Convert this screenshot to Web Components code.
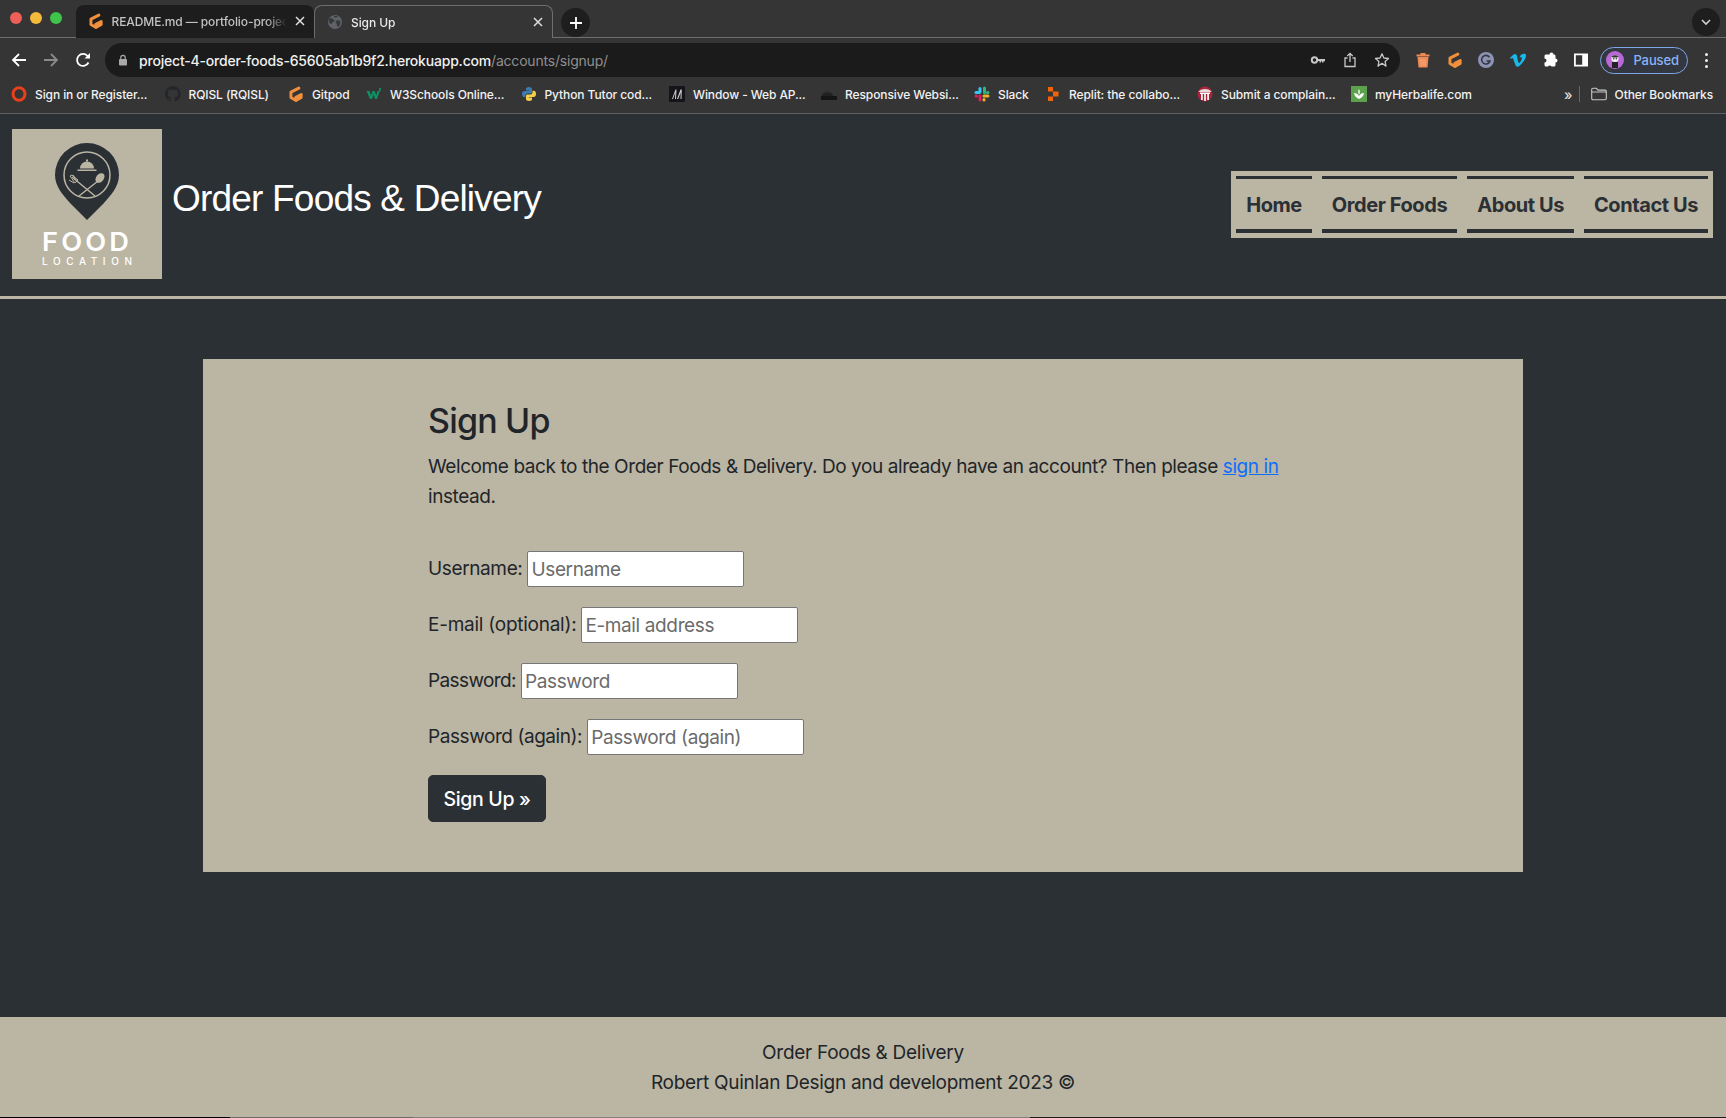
<!DOCTYPE html>
<html lang="en">
<head>
<meta charset="utf-8">
<title>Sign Up</title>
<style>
    html, body { margin: 0; height: 100%; background: #2b3035; }
    body { display: flex; flex-direction: column; height: 1118px; overflow: hidden; font-family: Inter, "Liberation Sans", sans-serif; }
    site-main { flex: 1; }
</style>
</head>
<body>
    <browser-tabstrip>
        <browser-tab icon="gitpod" muted>README.md — portfolio-project-4</browser-tab>
        <browser-tab icon="globe" active>Sign Up</browser-tab>
    </browser-tabstrip>
    <browser-toolbar></browser-toolbar>
    <bookmark-bar>
        <bookmark-item icon="opera" style="width:138px">Sign in or Register...</bookmark-item>
        <bookmark-item icon="github" style="width:108px">RQISL (RQISL)</bookmark-item>
        <bookmark-item icon="gitpod" style="width:62.500px">Gitpod</bookmark-item>
        <bookmark-item icon="w3" style="width:139px">W3Schools Online...</bookmark-item>
        <bookmark-item icon="python" style="width:133px">Python Tutor cod...</bookmark-item>
        <bookmark-item icon="mdn" style="width:136.500px">Window - Web AP...</bookmark-item>
        <bookmark-item icon="responsive" style="width:137.500px">Responsive Websi...</bookmark-item>
        <bookmark-item icon="slack" style="width:55.500px">Slack</bookmark-item>
        <bookmark-item icon="replit" style="width:136.500px">Replit: the collabo...</bookmark-item>
        <bookmark-item icon="submit" style="width:138.500px">Submit a complain...</bookmark-item>
        <bookmark-item icon="herbalife">myHerbalife.com</bookmark-item>
    </bookmark-bar>

    <site-header title="Order Foods &amp; Delivery">
        <nav-link>Home</nav-link>
        <nav-link>Order Foods</nav-link>
        <nav-link>About Us</nav-link>
        <nav-link>Contact Us</nav-link>
    </site-header>

    <site-main>
        <signup-card heading="Sign Up">
            <form-row label="Username:" placeholder="Username"></form-row>
            <form-row label="E-mail (optional):" placeholder="E-mail address" style="letter-spacing:-.25px"></form-row>
            <form-row label="Password:" placeholder="Password" style="letter-spacing:-.61px"></form-row>
            <form-row label="Password (again):" placeholder="Password (again)" style="letter-spacing:-.43px"></form-row>
        </signup-card>
    </site-main>

    <site-footer>
        <div>Order Foods &amp; Delivery</div>
        <div>Robert Quinlan Design and development 2023 ©</div>
    </site-footer>
    <dock-sliver></dock-sliver>

<script>
const ICONS = {
    gitpod: `<svg viewBox="1.500 1.500 13 13" width="16" height="16"><path d="M10.300 3.200 3.900 6.500v4.300L8 13.200l4.200-2.400V8.400L7.900 10.600" fill="none" stroke="#f0903c" stroke-width="2.400" stroke-linecap="round" stroke-linejoin="round"/></svg>`,
    globe: `<svg viewBox="0 0 16 16" width="16" height="16"><circle cx="8" cy="8" r="7" fill="#5f6368"/><path d="M3 4c2 0 3 1 4 2s0 2-1 2-1 2-2 2-2-2-2-3 0-3 1-3zm6 3c1-1 3-1 4 0s0 4-1 5-2 1-2 0 0-2-1-3 0-2 0-2zM7 1.500c1 1 3 0 4 .8-1 1-2 1.700-3 1.200S6.500 2 7 1.500z" fill="#36383a"/></svg>`,
    opera: `<svg viewBox="0 0 16 16" width="16" height="16"><ellipse cx="8" cy="8" rx="6" ry="6.300" fill="none" stroke="#e8401c" stroke-width="3"/></svg>`,
    github: `<svg viewBox="0 0 16 16" width="16" height="16"><path fill="#23272b" d="M8 0a8 8 0 0 0-2.500 15.600c.4.1.5-.2.5-.4v-1.400c-2.200.5-2.700-1-2.700-1-.4-.9-.9-1.200-.9-1.200-.7-.5.100-.5.100-.5.800.100 1.200.8 1.200.8.700 1.200 1.900.9 2.300.7.100-.5.300-.9.500-1.100-1.800-.2-3.700-.9-3.700-4 0-.9.300-1.600.8-2.100-.1-.2-.4-1 .1-2.100 0 0 .7-.2 2.200.8a7.500 7.500 0 0 1 4 0c1.500-1 2.200-.8 2.200-.8.400 1.100.2 1.900.1 2.100.5.600.8 1.300.8 2.100 0 3.100-1.900 3.700-3.700 3.900.3.300.6.800.6 1.500v2.200c0 .2.100.5.600.4A8 8 0 0 0 8 0z"/></svg>`,
    w3: `<svg viewBox="0 0 16 16" width="16" height="16"><path d="M.5 5h3.200l1.300 4.500L6.500 5h2.300l1.400 4.500L11.500 5h2.400L11 13H9.100L7.600 8.500 6 13H4z" fill="#0f8f63"/><path d="M13 2h2v1l-1 .8h1v1.200h-2v-.8l1-1h-1z" fill="#0f8f63"/></svg>`,
    python: `<svg viewBox="0 0 16 16" width="16" height="16"><path d="M8 1C5.500 1 5 2 5 3v1.500h3.200V5H3.300C2 5 1 6 1 8s1 3.200 2.200 3.200H4.500V9.500c0-1.100 1-2 2-2h3c.9 0 1.500-.7 1.500-1.500V3c0-1-1-2-3-2z" fill="#3d7cb0"/><path d="M8 15c2.500 0 3-1 3-2v-1.500H7.800V11h4.900C14 11 15 10 15 8s-1-3.200-2.200-3.200H11.500v1.700c0 1.100-1 2-2 2h-3c-.9 0-1.500.7-1.500 1.500v3c0 1 1 2 3 2z" fill="#f5cf4a"/></svg>`,
    mdn: `<svg viewBox="0 0 16 16" width="16" height="16"><rect width="16" height="16" fill="#15141a"/><path d="M3 13 6.500 3.500h1L7 13H6l.3-6.500L4 13zm5 0 3.500-9.500h1.300L12.500 13h-1l.2-6.500L9.200 13z" fill="#cfcfcf"/></svg>`,
    responsive: `<svg viewBox="0 0 16 16" width="16" height="16"><path d="M0 10h16v4H0z" fill="#151515"/><path d="M2 7h9l1 3H1z" fill="#202020"/><path d="M4 5.500h5V7H4z" fill="#2a2a2a"/></svg>`,
    slack: `<svg viewBox="0 0 16 16" width="16" height="16"><g fill="none" stroke-width="3" stroke-linecap="round"><path d="M6 2.500v3.500" stroke="#36c5f0"/><path d="M2 6.500h3" stroke="#36c5f0"/><path d="M10.500 2v4.500" stroke="#2eb67d"/><path d="M14 6.500h-.5" stroke="#2eb67d"/><path d="M10 14v-.5" stroke="#ecb22e"/><path d="M10 10h4" stroke="#ecb22e"/><path d="M6 14v-4" stroke="#e01e5a"/><path d="M2 10h.5" stroke="#e01e5a"/></g></svg>`,
    replit: `<svg viewBox="0 0 16 16" width="16" height="16"><path d="M3 1h5v4.500H3zM8 5.500h5.500v5H8zM3 10.500h5V15H3z" fill="#f26207"/></svg>`,
    submit: `<svg viewBox="0 0 16 16" width="16" height="16"><circle cx="8" cy="8" r="7.500" fill="#a8243b"/><path d="M1.500 6C3 2 13 2 14.500 6z" fill="#e6dada"/><path d="M3 6.500h10v1.500H3z" fill="#fff"/><path d="M4 8h1.800v6H4zM7.100 8h1.800v7H7.100zM10.200 8H12v6h-1.800z" fill="#f2eeee"/></svg>`,
    herbalife: `<svg viewBox="0 0 16 16" width="16" height="16"><rect width="16" height="16" fill="#5ca14b"/><path d="M3 7c2 0 4 1 5 3 1-2 3-3 5-3-.3 3-2.500 5-5 6-2.500-1-4.700-3-5-6z" fill="#fff"/><path d="M8 3c1 1.500 1 4 0 6-1-2-1-4.500 0-6z" fill="#fff"/></svg>`,
    folder: `<svg viewBox="0 0 16 16" width="16" height="16"><path d="M.7 3.500c0-.7.500-1.200 1.200-1.200h3.500l1.600 1.800h7.100c.7 0 1.200.5 1.200 1.200v7.200c0 .7-.5 1.200-1.200 1.200H1.900c-.7 0-1.200-.5-1.200-1.200zM.7 6h14.600" fill="none" stroke="#c7c7c7" stroke-width="1.100"/></svg>`,
    back: `<svg viewBox="0 0 16 16" width="16" height="16"><path d="M15 8H2.500M8 2 2 8l6 6" fill="none" stroke="#fff" stroke-width="1.800"/></svg>`,
    forward: `<svg viewBox="0 0 16 16" width="16" height="16"><path d="M1 8h12.500M8 2l6 6-6 6" fill="none" stroke="#8a8a8a" stroke-width="1.800"/></svg>`,
    reload: `<svg viewBox="0 0 16 16" width="16" height="16"><path d="M13.500 10.500A6 6 0 1 1 12.600 4" fill="none" stroke="#fff" stroke-width="1.800"/><path d="M9.500 6.500h5.500V1z" fill="#fff"/></svg>`,
    lock: `<svg viewBox="0 0 12 12" width="12" height="12"><rect x="2" y="5" width="8" height="6.500" rx="1" fill="#a9a9a9"/><path d="M3.800 5V3.500a2.200 2.200 0 0 1 4.400 0V5" fill="none" stroke="#a9a9a9" stroke-width="1.200"/></svg>`,
    key: `<svg viewBox="0 0 16 16" width="16" height="16"><circle cx="4.500" cy="8" r="2.700" fill="none" stroke="#c7c7c7" stroke-width="2"/><path d="M7.500 7h7.500v2.200h-1.500v1.300h-1.500V9.200h-1v1.300H9.500V9H7.500z" fill="#c7c7c7"/></svg>`,
    share: `<svg viewBox="0 0 16 16" width="16" height="16"><path d="M5.500 6H3v8.500h10V6h-2.500" fill="none" stroke="#c7c7c7" stroke-width="1.300"/><path d="M8 10V1.500M5.300 4 8 1.300 10.700 4" fill="none" stroke="#c7c7c7" stroke-width="1.300"/></svg>`,
    star: `<svg viewBox="0 0 16 16" width="16" height="16"><path d="m8 1.800 1.900 4.200 4.600.5-3.400 3.100.9 4.500L8 11.300l-4 2.800.9-4.500L1.500 6.500 6.100 6z" fill="none" stroke="#c7c7c7" stroke-width="1.300" stroke-linejoin="round"/></svg>`,
    trash: `<svg viewBox="0 0 16 16" width="16" height="16"><path d="M1.500 2.500h13v2h-13zM5.500 1h5v1.500h-5z" fill="#ee8a55"/><path d="M2.500 5h11l-1 10.500h-9z" fill="#ee8a55"/><path d="M6 7v7M8 7v7M10 7v7" stroke="#f7b48c" stroke-width=".7"/></svg>`,
    grammarly: `<svg viewBox="0 0 16 16" width="16" height="16"><circle cx="8" cy="8" r="8" fill="#8c93b5"/><path d="M11.500 5.300A4.300 4.300 0 1 0 12 9H8.500" fill="none" stroke="#33363f" stroke-width="1.600"/></svg>`,
    vimeo: `<svg viewBox="0 0 16 16" width="16" height="16"><path d="M15.900 4.200c-.1 1.500-1.100 3.600-3.200 6.300-2.100 2.800-3.900 4.200-5.300 4.200-.9 0-1.700-.8-2.300-2.500L3.800 8.500C3.300 6.800 2.800 6 2.300 6c-.1 0-.5.200-1.300.8L0 5.800c.8-.7 1.600-1.400 2.400-2.200 1.100-.9 1.900-1.400 2.400-1.500 1.300-.1 2.100.8 2.400 2.600.3 2 .5 3.200.7 3.700.4 1.700.8 2.500 1.300 2.500.3 0 .9-.6 1.500-1.700.7-1.100 1-1.900 1.100-2.500.1-1-.3-1.400-1.100-1.400-.4 0-.8.100-1.200.3.800-2.600 2.300-3.800 4.500-3.800 1.700.1 2.400 1 1.900 2.400z" fill="#1ab7ea"/></svg>`,
    puzzle: `<svg viewBox="0 0 16 16" width="16" height="16"><path d="M6 3a2 2 0 0 1 4 0h.5c.8 0 1.500.7 1.500 1.500V7a2 2 0 0 1 0 4v2.500c0 .8-.7 1.500-1.500 1.500H8a2 2 0 0 0-3.500 0H2.500C1.700 15 1 14.300 1 13.500V11a2 2 0 0 0 0-4V4.500C1 3.700 1.700 3 2.500 3z" fill="#fff" transform="translate(1.500 -.5)"/></svg>`,
    sidebar: `<svg viewBox="0 0 16 16" width="16" height="16"><path fill-rule="evenodd" d="M1 1.500h14v13H1zM2.800 3.300v9.400h6.400V3.300z" fill="#fff"/></svg>`,
    avatar: `<svg viewBox="0 0 18 18" width="18" height="18"><circle cx="9" cy="9" r="9" fill="#ba68d8"/><path d="M6 17V11h6v6z" fill="#222"/><circle cx="9" cy="7.500" r="3.600" fill="#eee"/><path d="M5.500 6c1-2.500 6-2.500 7 0l-1.500.5h-4z" fill="#333"/><circle cx="7.700" cy="7.800" r=".7" fill="#222"/><circle cx="10.300" cy="7.800" r=".7" fill="#222"/></svg>`
};

// Small helper so each element doesn't repeat the attachShadow dance
class ShadowElement extends HTMLElement {
    connectedCallback() {
        if (!this.shadowRoot) {
            this.attachShadow({ mode: 'open' });
        }
        this.shadowRoot.innerHTML = this.render();
    }
}

class BrowserTabstrip extends ShadowElement {
    render() {
        return `
            <style>
                :host { display: flex; height: 38px; box-sizing: border-box; background: #353535; border-bottom: 1px solid #6e6e6e; }
                .lights { display: flex; gap: 8px; padding: 12px 0 0 10px; width: 75.500px; box-sizing: border-box; }
                .lights i { width: 12px; height: 12px; border-radius: 50%; }
                .tabs { display: flex; padding-top: 5px; }
                .new { width: 29px; height: 29px; margin: 8px 0 0 8px; border-radius: 50%; background: #1e1e1e; display: flex; align-items: center; justify-content: center; }
                .spacer { flex: 1; }
                .chev { width: 28px; height: 28px; margin: 8px 6px 0 0; border-radius: 50%; background: #1e1e1e; display: flex; align-items: center; justify-content: center; }
            </style>
            <div class="lights">
                <i style="background:#ed5f57"></i><i style="background:#f4ba3c"></i><i style="background:#3ec44a"></i>
            </div>
            <div class="tabs"><slot></slot></div>
            <div class="new"><svg viewBox="0 0 14 14" width="14" height="14"><path d="M7 1v12M1 7h12" stroke="#fff" stroke-width="1.800"/></svg></div>
            <div class="spacer"></div>
            <div class="chev"><svg viewBox="0 0 12 12" width="12" height="12"><path d="m2 4 4 4 4-4" fill="none" stroke="#d0d0d0" stroke-width="1.600"/></svg></div>
        `;
    }
}

class BrowserTab extends ShadowElement {
    render() {
        const active = this.hasAttribute('active');
        return `
            <style>
                :host { display: flex; align-items: center; width: ${active ? 239 : 238.5}px; height: 33px; box-sizing: border-box; padding: 0 9px 1px 12px; gap: 8px;
                    border-radius: 8px 8px 0 0; font: 500 12px Inter, "Liberation Sans", sans-serif; letter-spacing: -.1px;
                    ${active ? 'background:#353535;border:1px solid #6e6e6e;border-bottom:none;color:#e8e8e8;margin-bottom:-1px;height:34px;' : 'background:#1d1d1d;color:#c2c2c2;'} }
                .icon { width: 16px; height: 16px; flex: none; display: block; }
                .label { flex: 1; white-space: nowrap; overflow: hidden; -webkit-mask-image: linear-gradient(90deg, #000 88%, transparent); mask-image: linear-gradient(90deg, #000 88%, transparent); }
                .close { flex: none; width: 10px; height: 10px; }
            </style>
            <span class="icon">${ICONS[this.getAttribute('icon')]}</span>
            <span class="label"><slot></slot></span>
            <svg class="close" viewBox="0 0 10 10"><path d="m1 1 8 8M9 1 1 9" stroke="#e0e0e0" stroke-width="1.500"/></svg>
        `;
    }
}

class BrowserToolbar extends ShadowElement {
    render() {
        return `
            <style>
                :host { display: flex; align-items: center; height: 39px; padding-top: 5px; box-sizing: border-box; background: #353535; }
                .nav { display: flex; gap: 16px; padding-left: 11px; width: 105px; box-sizing: border-box; }
                .nav span, .ext span, .inner span { display: flex; width: 16px; height: 16px; }
                .omni { display: flex; align-items: center; width: 1295px; height: 34px; border-radius: 17px; background: #1b1b1b; padding: 0 10px 0 12px; box-sizing: border-box; }
                .lock { margin-left: 0; display: flex; }
                .url { margin-left: 10px; flex: 1; white-space: nowrap; font: 500 14px Inter, "Liberation Sans", sans-serif; letter-spacing: -.2px; color: #f0f0f0; }
                .url em { font-style: normal; color: #8f8f8f; font-weight: 400; }
                .inner { display: flex; gap: 16px; }
                .ext { display: flex; align-items: center; margin-left: 15px; gap: 15.700px; }
                .pill { display: flex; align-items: center; margin-left: 11px; width: 88px; height: 27px; box-sizing: border-box; border: 1px solid #7ea7e8; border-radius: 14px; background: #33373f; padding-left: 5px; gap: 9px; font: 500 13px Inter, "Liberation Sans", sans-serif; letter-spacing: -.1px; color: #8ab4f8; }
                .dots { margin-left: 10px; width: 16px; display: flex; flex-direction: column; align-items: center; gap: 3px; }
                .dots i { width: 3px; height: 3px; border-radius: 50%; background: #eee; }
            </style>
            <div class="nav"><span style="display:flex">${ICONS.back}</span><span style="display:flex">${ICONS.forward}</span><span style="display:flex">${ICONS.reload}</span></div>
            <div class="omni">
                <span class="lock">${ICONS.lock}</span>
                <span class="url">project-4-order-foods-65605ab1b9f2.herokuapp.com<em>/accounts/signup/</em></span>
                <div class="inner"><span>${ICONS.key}</span><span>${ICONS.share}</span><span>${ICONS.star}</span></div>
            </div>
            <div class="ext">
                <span>${ICONS.trash}</span><span>${ICONS.gitpod}</span><span>${ICONS.grammarly}</span><span>${ICONS.vimeo}</span><span>${ICONS.puzzle}</span><span>${ICONS.sidebar}</span>
            </div>
            <div class="pill">${ICONS.avatar}<span>Paused</span></div>
            <div class="dots"><i></i><i></i><i></i></div>
        `;
    }
}

class BookmarkBar extends ShadowElement {
    render() {
        return `
            <style>
                :host { display: flex; align-items: center; height: 37px; box-sizing: border-box; background: #353535; border-bottom: 1px solid #5c6266; padding: 0 0 2px 11px; gap: 15.500px; font: 500 12px Inter, "Liberation Sans", sans-serif; letter-spacing: -.1px; color: #f2f2f2; }
                .spacer { flex: 1; }
                .more { color: #ddd; font-size: 14px; }
                .sep { width: 1px; height: 16px; background: #666; margin-left: -9px; }
                .other { display: flex; align-items: center; gap: 8px; margin: 0 13px 0 -5px; }
            </style>
            <slot></slot>
            <div class="spacer"></div>
            <span class="more">»</span>
            <span class="sep"></span>
            <div class="other">${ICONS.folder}<span>Other Bookmarks</span></div>
        `;
    }
}

class BookmarkItem extends ShadowElement {
    render() {
        return `
            <style>
                :host { display: flex; align-items: center; gap: 8px; white-space: nowrap; flex: none; }
                span { display: flex; }
            </style>
            <span>${ICONS[this.getAttribute('icon')]}</span>
            <slot></slot>
        `;
    }
}

class SiteHeader extends ShadowElement {
    render() {
        return `
            <style>
                :host { display: flex; align-items: center; box-sizing: border-box; height: 185px; padding: 16px 13px 19px 12px; border-bottom: 3px solid #bbb5a4; background: #2b3035; }
                .logo { width: 150px; height: 150px; background: #bbb5a4; flex: none; }
                h1 { flex: 1; margin: -10px 0 0 10px; font: 400 37px/48px "Liberation Sans", Arial, sans-serif; color: #fff; align-self: center; letter-spacing: -.8px; }
                nav { display: flex; gap: 10px; padding: 5px; margin-top: 1px; background: #bbb5a4; }
            </style>
            <svg class="logo" viewBox="0 0 150 150">
                <path d="M75 14a32 32 0 0 1 32 32c0 12-9 21-15 28L75 91 58 74c-6-7-15-16-15-28a32 32 0 0 1 32-32z" fill="#2b3035"/>
                <circle cx="75" cy="46" r="23" fill="none" stroke="#bbb5a4" stroke-width="1.500"/>
                <path d="M68 39.500a7 7 0 0 1 14 0z" fill="#bbb5a4"/>
                <rect x="74" y="30.500" width="2" height="2" fill="#bbb5a4"/>
                <rect x="65.500" y="40.500" width="19" height="1.500" fill="#bbb5a4"/>
                <path d="M60 48 83 67M86 52 67 67" stroke="#bbb5a4" stroke-width="1.400" fill="none"/>
                <path d="M58 47l5 7 3-3-6-5zM57 51l5 3M61 46l3 5" stroke="#bbb5a4" stroke-width="1" fill="none"/>
                <ellipse cx="88" cy="49" rx="3.800" ry="5.400" transform="rotate(40 88 49)" fill="#bbb5a4"/>
                <text x="30" y="122" font-family="Inter, sans-serif" font-weight="600" font-size="26" letter-spacing="3" fill="#fff" textLength="90" lengthAdjust="spacingAndGlyphs">FOOD</text>
                <text x="30" y="136" font-family="Inter, sans-serif" font-weight="500" font-size="10" fill="#fff" textLength="90" lengthAdjust="spacing">LOCATION</text>
            </svg>
            <h1>${this.getAttribute('title')}</h1>
            <nav><slot></slot></nav>
        `;
    }
}

class NavLink extends ShadowElement {
    render() {
        return `
            <style>
                :host { display: block; box-sizing: border-box; height: 57px; padding: 0 10px; border-top: 3px solid #2b3035; border-bottom: 4px solid #2b3035; font: 700 20px/52px Inter, "Liberation Sans", sans-serif; letter-spacing: -.42px; color: #2b3035; white-space: nowrap; }
            </style>
            <slot></slot>
        `;
    }
}

class SignupCard extends ShadowElement {
    render() {
        return `
            <style>
                :host { display: block; box-sizing: border-box; width: 1320px; margin: 60px auto 0; padding: 41px 0 50px 225px; background: #bbb5a4; color: #212529; font: 400 19px/30px Inter, "Liberation Sans", sans-serif; letter-spacing: -.37px; }
                h2 { margin: 0 0 10px; font: 500 34px/42px Inter, "Liberation Sans", sans-serif; letter-spacing: -.8px; }
                p { margin: 0 0 39px; max-width: 870px; letter-spacing: -.42px; }
                a { color: #0d6efd; }
                button { display: block; width: 118px; height: 47px; margin-top: 20px; padding: 0; border: 1px solid #2b3035; border-radius: 5px; background: #2b3035; color: #fff; font: 500 19.500px/30px Inter, "Liberation Sans", sans-serif; letter-spacing: -.35px; }
            </style>
            <h2>${this.getAttribute('heading')}</h2>
            <p>Welcome back to the Order Foods &amp; Delivery. Do you already have an account? Then please <a href="#">sign in</a> instead.</p>
            <slot></slot>
            <button type="button">Sign Up »</button>
        `;
    }
}

class FormRow extends ShadowElement {
    render() {
        return `
            <style>
                :host { display: flex; align-items: center; gap: 5px; height: 36px; margin-bottom: 20px; }
                :host(:last-of-type) { margin-bottom: 0; }
                input { box-sizing: border-box; width: 217px; height: 36px; margin: 0; padding: 1px 3px; border: 1px solid #767676; border-radius: 2px; background: #fff; color: #212529; font: inherit; letter-spacing: -.37px; outline: none; }
                input::placeholder { color: #6b6b6b; opacity: 1; }
            </style>
            <label>${this.getAttribute('label')}</label>
            <input type="text" placeholder="${this.getAttribute('placeholder')}">
        `;
    }
}

class SiteFooter extends ShadowElement {
    render() {
        return `
            <style>
                :host { display: block; box-sizing: border-box; height: 100px; padding-top: 21px; background: #bbb5a4; color: #212529; text-align: center; font: 400 19px/30px Inter, "Liberation Sans", sans-serif; letter-spacing: -.28px; }
            </style>
            <slot></slot>
        `;
    }
}

// one row of the dock peeks in at the very bottom of the capture
class DockSliver extends ShadowElement {
    render() {
        return `
            <style>
                :host { display: flex; height: 1px; flex: none; background: #1c1c1c; }
                i { display: block; height: 1px; }
            </style>
            <i style="width:230px;background:#000"></i><i style="width:183px;background:#6b6b6b"></i><i style="width:617px;background:#808080"></i>
        `;
    }
}

customElements.define('browser-tabstrip', BrowserTabstrip);
customElements.define('browser-tab', BrowserTab);
customElements.define('browser-toolbar', BrowserToolbar);
customElements.define('bookmark-bar', BookmarkBar);
customElements.define('bookmark-item', BookmarkItem);
customElements.define('site-header', SiteHeader);
customElements.define('nav-link', NavLink);
customElements.define('signup-card', SignupCard);
customElements.define('form-row', FormRow);
customElements.define('site-footer', SiteFooter);
customElements.define('dock-sliver', DockSliver);
</script>
</body>
</html>
